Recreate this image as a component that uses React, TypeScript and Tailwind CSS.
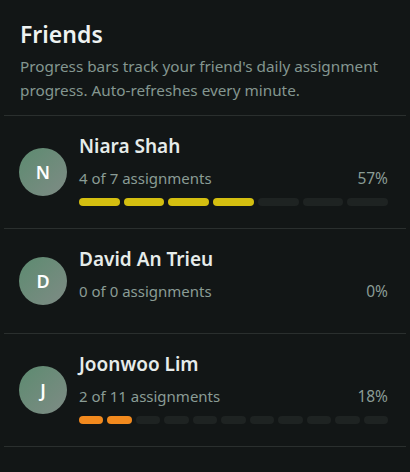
import React from "react";

interface Friend {
  id: string;
  name: string;
  done: number;
  total: number;
}

const friends: Friend[] = [
  { id: "1", name: "Niara Shah", done: 4, total: 7 },
  { id: "2", name: "David An Trieu", done: 0, total: 0 },
  { id: "3", name: "Joonwoo Lim", done: 2, total: 11 },
];

const barColor = (pct: number) => {
  if (pct >= 50) return "bg-[#d4bf10]";
  return "bg-[#f28a1e]";
};

const FriendRow: React.FC<{ friend: Friend }> = ({ friend }) => {
  const pct = friend.total === 0 ? 0 : Math.round((friend.done / friend.total) * 100);
  return (
    <div className="flex items-center gap-3 border-b border-[#2a2f2e] py-4 pl-[15px] pr-[18px]">
      <div className="flex h-12 w-12 shrink-0 items-center justify-center rounded-full bg-gradient-to-br from-[#5c8b70] to-[#7e8b85] text-lg font-semibold text-white">
        {friend.name[0]}
      </div>
      <div className="min-w-0 flex-1">
        <div className="text-[19px] leading-7 font-semibold text-[#e6ecea]">{friend.name}</div>
        <div className="mt-1.5 flex justify-between text-[15px] leading-6 text-[#8a9c95]">
          <span>
            {friend.done} of {friend.total} assignments
          </span>
          <span className="text-[15.5px]">{pct}%</span>
        </div>
        <div className="flex gap-1 pt-2 pb-1.5">
          {Array.from({ length: friend.total }).map((_, i) => (
            <div
              key={i}
              className={`h-2 flex-1 rounded-full ${i < friend.done ? barColor(pct) : "bg-[#1e2322]"}`}
            />
          ))}
        </div>
      </div>
    </div>
  );
};

export default function App() {
  return (
    <div
      className="min-h-screen bg-[#121616] px-1"
      style={{ fontFamily: '"Noto Sans", "Open Sans", sans-serif' }}
    >
      <div className="border-b border-[#2a2f2e] px-4 pt-[18px] pb-[13px]">
        <h2 className="text-[23px] leading-8 font-semibold text-[#eef2f1]">Friends</h2>
        <p className="mt-1 text-[15.3px] leading-6 text-[#849690]">
          Progress bars track your friend's daily assignment progress. Auto-refreshes every minute.
        </p>
      </div>
      {friends.map((f) => (
        <FriendRow key={f.id} friend={f} />
      ))}
    </div>
  );
}
